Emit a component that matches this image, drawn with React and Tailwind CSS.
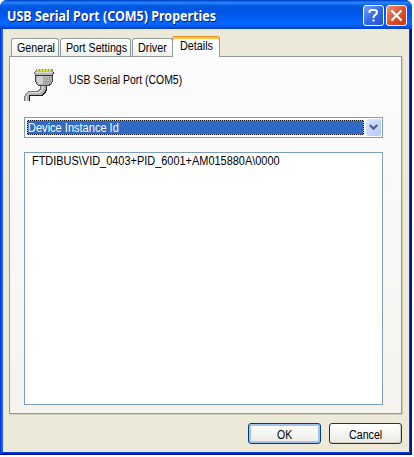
import React from "react";

function Label({ className = "", children }) {
  return <span className={`inline-block origin-left whitespace-pre ${className}`}>{children}</span>;
}

function Tab({ className, children }) {
  return (
    <div className={`h-[18px] shrink-0 rounded-t-[3px] border border-b-0 border-[#919b9c] bg-linear-to-b from-white to-[#f0f0ea] pl-[5px] leading-[19px] ${className}`}>
      {children}
    </div>
  );
}

function SerialPlug() {
  return (
    <svg className="shrink-0" width="32" height="33" viewBox="0 0 32 33" shapeRendering="crispEdges">
      <path d="M16 17H23V22H22V24H21V25H20V26H19V27H6V32H0V27H1V25H2V24H3V23H4V22H14V21H15V20H16Z" fill="#777" />
      <path d="M17 17H22V22H21V23H20V25H18V26H5V32H1V27H2V25H3V24H4V23H15V22H16V21H17Z" fill="#b4b4b4" />
      <path d="M18 17H19V21H18V22H17V23H16V24H5V25H4V26H3V32H2V27H3V25H4V24H5V23H15V22H16V21H18Z" fill="#dedede" />
      <path d="M22 17H23V22H22V24H21V25H20V26H19V27H6V32H5V26H18V25H19V24H20V23H21V21H22Z" fill="#1c1c1c" />
      <path d="M11 6H29V13H28V15H27V16H26V17H14V16H13V15H12V13H11Z" fill="#444" />
      <path d="M12 6H28V13H27V15H25V16H14V15H13V13H12Z" fill="#b0b0b0" />
      <path d="M13 6H19V15H14V13H13Z" fill="#cecece" />
      <path d="M25 8H26V9H25ZM23 10H24V11H23ZM25 10H26V11H25ZM22 12H23V13H22ZM24 12H25V13H24ZM26 12H27V13H26ZM21 14H22V15H21ZM23 14H24V15H23ZM25 14H26V15H25ZM19 9H20V10H19ZM20 12H21V13H20Z" fill="#858585" />
      <path d="M11 2H29V3H30V5H29V6H28V7H12V6H11V5H10V3H11Z" fill="#777" />
      <path d="M12 2H28V3H29V5H28V6H12V5H11V3H12Z" fill="#b8b8b8" />
      <path d="M12 3H28V4H12Z" fill="#dcdcdc" />
      <path d="M29 3H30V5H29V6H28V7H12V6H28V5H29Z" fill="#333" />
      <path d="M12 0H29V2H12Z" fill="#96927a" />
      <path d="M13 0H15V2H13ZM16 0H18V2H16ZM19 0H21V2H19ZM22 0H24V2H22ZM25 0H27V2H25Z" fill="#f5e61f" />
    </svg>
  );
}

export default function App() {
  return (
    <div className="h-[457px] w-[414px] overflow-hidden bg-white font-['Liberation_Sans',sans-serif] text-[12px] text-black">
      <div className="flex h-[455px] w-[412px] flex-col overflow-hidden rounded-t-[7px] bg-[#0831d9]">
        <header className="flex h-[29px] shrink-0 items-start bg-[linear-gradient(180deg,#0048d0_0px,#0048d0_1px,#2a86f5_2px,#1674f5_4px,#0058e3_6px,#0054e0_10px,#0058ee_15px,#0665fd_21px,#0665fd_25px,#0050dd_27px,#003fc0_29px)] pl-[7px] pr-[5px] pt-[6px]">
          <Label className="mt-px flex-1 scale-x-[.893] font-['Noto_Sans',sans-serif] text-[14px] leading-[18px] font-bold text-white [text-shadow:1px_1px_0_#0a1883]">USB Serial Port (COM5) Properties</Label>
          <div className="-mt-px flex gap-[2px]">
            <div className="flex h-[21px] w-[21px] items-center justify-center rounded-[3px] border border-white bg-linear-to-br from-[#7ba0f4] via-[#3568e6] to-[#2250d4]">
              <svg width="19" height="19" viewBox="0 0 19 19" fill="none" stroke="white" strokeWidth="2">
                <path d="M5.5 7V5.5Q5.5 4 7.5 4H10.5Q13 4 13 6.5Q13 8 11 9Q9.5 10 9.5 12" />
                <path d="M8.5 13.5H10.5V15.5H8.5Z" fill="white" stroke="none" />
              </svg>
            </div>
            <div className="flex h-[21px] w-[21px] items-center justify-center rounded-[3px] border border-white bg-linear-to-br from-[#ee9478] via-[#e0502b] to-[#c63a12]">
              <svg width="19" height="19" viewBox="0 0 19 19" stroke="white" strokeWidth="2.2"><path d="M4.5 4.5L14.5 14.5M14.5 4.5L4.5 14.5" /></svg>
            </div>
          </div>
        </header>
        <div className="flex min-h-0 flex-1 border-x border-b border-l-[#0831d9] border-r-[#00138c] border-b-[#00138c]">
          <div className="flex w-full border-x border-b border-l-[#0a5bee] border-r-[#001ea0] border-b-[#001ea0]">
            <div className="flex w-full flex-col border-x border-b border-l-[#166aee] border-r-[#0441d8] border-b-[#0441d8] bg-[#ece9d8] pl-[6px] pt-[7px]">
              <div className="flex h-[20px] items-end pl-[2px]">
                <Tab className="w-[48px]"><Label className="scale-x-[.89]">General</Label></Tab>
                <Tab className="ml-px w-[71px]"><Label className="scale-x-[.89]">Port Settings</Label></Tab>
                <Tab className="ml-px w-[41px]"><Label className="scale-x-[.9]">Driver</Label></Tab>
                <div className="relative z-10 -mb-px -ml-px h-[21px] w-[48px] rounded-t-[3px] border-x border-t border-x-[#919b9c] border-t-[#e68b2c] bg-[#fcfcfe] pl-[7px] leading-[18px] shadow-[inset_0_2px_0_#ffc73c]"><Label className="scale-x-[.9]">Details</Label></div>
              </div>
              <main className="flex h-[358px] w-[393px] flex-col border border-[#919b9c] bg-linear-to-b from-[#fcfcfe] to-[#f4f3ee] pl-[14px] shadow-[1px_1px_0_#d0ceb9]">
                <div className="flex h-[60px] items-start pt-[12px]">
                  <SerialPlug />
                  <Label className="ml-[13px] mt-[2px] scale-x-[.87] leading-[18px]">USB Serial Port (COM5)</Label>
                </div>
                <div className="flex h-[21px] w-[359px] border border-[#7f9db9] bg-white py-[2px] pl-[2px]">
                  <div className="h-[15px] w-[337px] shrink-0 bg-[repeating-conic-gradient(#101018_0_25%,#eeb04a_0_50%)] bg-[length:2px_2px] p-px">
                    <div className="h-[13px] bg-[#316ac5] leading-[14px] text-white"><Label className="scale-x-[.92]">Device Instance Id</Label></div>
                  </div>
                  <div className="-mt-px ml-[2px] flex h-[17px] w-[15px] shrink-0 items-center justify-center rounded-[2px] bg-linear-to-br from-[#dce6fd] to-[#b4c8f6]">
                    <svg width="9" height="7" viewBox="0 0 9 7" fill="none" stroke="#4d6185" strokeWidth="2.2"><path d="M.8 1L4.5 4.7L8.2 1" /></svg>
                  </div>
                </div>
                <div className="mt-[14px] h-[253px] w-[359px] border border-[#7f9db9] bg-white pl-[7px] leading-[17px]">
                  <Label className="scale-x-[.912]">{"FTDIBUS\\VID_0403+PID_6001+AM015880A\\0000"}</Label>
                </div>
              </main>
              <footer className="mt-[9px] flex gap-[8px] pl-[239px]">
                <button className="h-[21px] w-[73px] rounded-[3px] border border-[#003c74] bg-linear-to-b from-white to-[#ecebe5] pl-[28px] text-left leading-[20px] shadow-[inset_0_0_0_2px_#a4c1f2]"><Label className="scale-x-[.88] pt-px">OK</Label></button>
                <button className="h-[21px] w-[73px] rounded-[3px] border border-[#003c74] bg-linear-to-b from-white to-[#ecebe5] pl-[19px] text-left leading-[20px] shadow-[inset_-1px_-1px_0_#d6d0c5]"><Label className="scale-x-[.89] pt-px">Cancel</Label></button>
              </footer>
            </div>
          </div>
        </div>
      </div>
    </div>
  );
}
